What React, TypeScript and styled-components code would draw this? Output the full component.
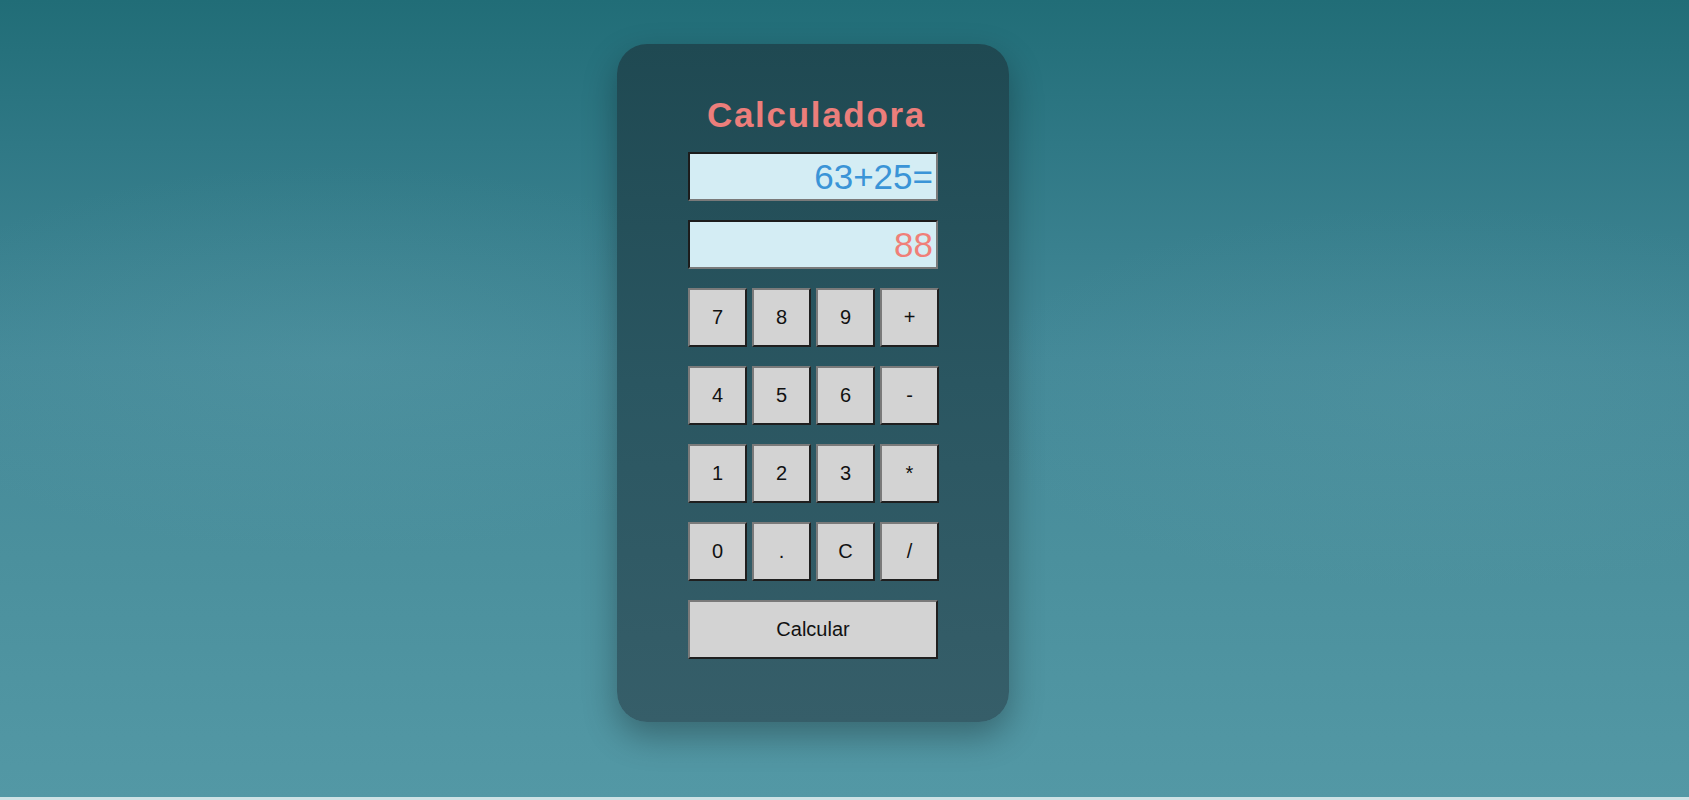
import styled, { createGlobalStyle } from "styled-components";

// === GLOBAL ===

const GlobalStyle = createGlobalStyle`
  html {
    background: #cde2e5;
  }
  body {
    margin: 0;
    font-family: "Liberation Sans", Arial, sans-serif;
  }
`;

// === STYLED COMPONENTS ===

const Page = styled.main`
  height: 797px;
  box-sizing: border-box;
  padding: 44px 63px 0 0;
  display: flex;
  justify-content: center;
  align-items: flex-start;
  background:
    radial-gradient(ellipse 40% 35% at 20% 45%, rgba(110, 170, 180, 0.18), transparent 70%),
    radial-gradient(ellipse 40% 35% at 85% 50%, rgba(110, 170, 180, 0.14), transparent 70%),
    linear-gradient(
      180deg,
      #216d77 0%,
      #2f7885 18%,
      #448998 45%,
      #4b909d 70%,
      #5398a5 100%
    );
`;

const Card = styled.section`
  width: 392px;
  height: 678px;
  box-sizing: border-box;
  padding: 51px 0 63px;
  border-radius: 30px;
  display: flex;
  flex-direction: column;
  align-items: center;
  background: linear-gradient(180deg, #1f4952 0%, #2a5661 50%, #365e69 100%);
  box-shadow: 0 14px 34px rgba(0, 0, 0, 0.3);
`;

const Title = styled.h1`
  margin: 0 0 17px;
  padding-left: 7px;
  height: 40px;
  line-height: 40px;
  font-size: 35px;
  font-weight: bold;
  letter-spacing: 1.7px;
  color: #ec7e7b;
`;

const Screen = styled.input<{ $tone: "expr" | "result" }>`
  width: 250px;
  height: 49px;
  box-sizing: border-box;
  margin: 0 0 19px;
  padding: 0 3px 0 2px;
  border-width: 2px;
  border-style: solid;
  border-color: #1c1c1c #7a7a7a #7a7a7a #1c1c1c;
  background: #d4edf4;
  font-family: "Liberation Sans", Arial, sans-serif;
  font-size: 35px;
  text-align: right;
  color: ${(p) => (p.$tone === "expr" ? "#3a94d7" : "#f07f78")};
  outline: none;
`;

const Keypad = styled.div`
  display: grid;
  grid-template-columns: repeat(4, 59px);
  grid-auto-rows: 59px;
  column-gap: 5px;
  row-gap: 19px;
  margin-left: 1px;
`;

const Key = styled.button<{ $wide?: boolean }>`
  width: ${(p) => (p.$wide ? "250px" : "59px")};
  height: 59px;
  box-sizing: border-box;
  padding: 0;
  border-width: 2px;
  border-style: solid;
  border-color: #7a7a7a #1f1f1f #1f1f1f #7a7a7a;
  background: #d3d3d3;
  color: #111;
  font-family: "Liberation Sans", Arial, sans-serif;
  font-size: 20px;
  cursor: pointer;
`;

const SubmitRow = styled.div`
  margin-top: 19px;
  width: 250px;
`;

// === COMPONENT ===

const KEYS = ["7", "8", "9", "+", "4", "5", "6", "-", "1", "2", "3", "*", "0", ".", "C", "/"];

export default function App() {
  return (
    <>
      <GlobalStyle />
      <Page>
        <Card>
          <Title>Calculadora</Title>
          <Screen $tone="expr" readOnly value="63+25=" />
          <Screen $tone="result" readOnly value="88" />
          <Keypad>
            {KEYS.map((k) => (
              <Key key={k}>{k}</Key>
            ))}
          </Keypad>
          <SubmitRow>
            <Key $wide>Calcular</Key>
          </SubmitRow>
        </Card>
      </Page>
    </>
  );
}
